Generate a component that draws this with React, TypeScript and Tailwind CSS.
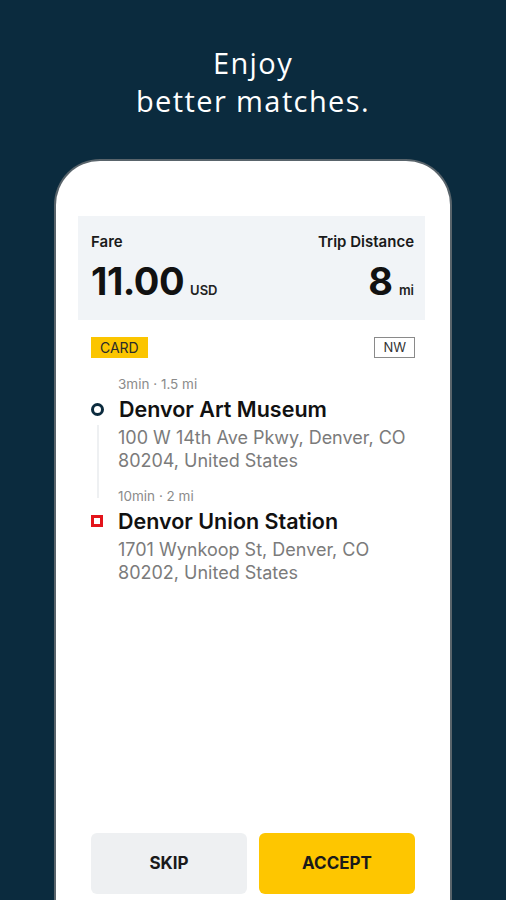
import { } from "react";

const sans = "font-['Inter','Noto_Sans',sans-serif]";

function Stop({ meta, title, address, kind, line }: { meta: string; title: string; address: string[]; kind: "start" | "end"; line?: boolean }) {
  return (
    <div className="relative flex flex-col">
      {line && <div className="absolute left-[6px] top-[50px] bottom-[-26px] w-[2px] bg-[#eef0f2]" />}
      <p className="pl-[27px] text-[13.5px] leading-[18px] text-[#8b8b8b]">{meta}</p>
      <div className="mt-[3px] flex items-center gap-[15px]">
        {kind === "start" ? (
          <span className="relative z-10 h-[13px] w-[13px] shrink-0 rounded-full border-[3.5px] border-[#0b2b3e] bg-white" />
        ) : (
          <span className="relative z-10 h-[12px] w-[12px] shrink-0 border-[3px] border-[#e3141b] bg-white" />
        )}
        <p className="text-[21.5px] font-semibold leading-[26px] text-[#111]">{title}</p>
      </div>
      <div className="mt-[4px] pl-[27px] text-[18px] leading-[23px] text-[#7b7b7b]">
        {address.map((a) => (
          <p key={a}>{a}</p>
        ))}
      </div>
    </div>
  );
}

export default function App() {
  return (
    <div className={`flex h-[900px] flex-col items-center overflow-hidden bg-[#0b2b3e] ${sans}`}>
      <h1 className="mt-[44px] text-center font-['Open_Sans','Noto_Sans',sans-serif] text-[29px] font-normal leading-[38px] tracking-[1.4px] text-white">
        Enjoy
        <br />
        better matches.
      </h1>

      <div className="mt-[39px] flex w-[398px] flex-1 flex-col rounded-t-[46px] border-x-2 border-t-2 border-[#59646b] bg-white pl-[22px] pr-[25px] pt-[55px] pb-[6px]">
        {/* fare box */}
        <div className="flex h-[104px] items-start justify-between bg-[#f1f4f7] pl-[13px] pr-[11px] pt-[16px]">
          <div className="flex flex-col">
            <p className="text-[15px] font-semibold leading-[20px] text-[#1a1a1a]">Fare</p>
            <p className="mt-[7px] flex items-baseline gap-[6px]">
              <span className="text-[38px] font-bold leading-[44px] tracking-[-0.5px] text-[#111]">11.00</span>
              <span className="text-[13px] font-semibold text-[#222]">USD</span>
            </p>
          </div>
          <div className="flex flex-col items-end">
            <p className="text-[15px] font-semibold leading-[20px] text-[#1a1a1a]">Trip Distance</p>
            <p className="mt-[7px] flex items-baseline gap-[6px]">
              <span className="text-[38px] font-bold leading-[44px] text-[#111]">8</span>
              <span className="text-[13px] font-semibold text-[#222]">mi</span>
            </p>
          </div>
        </div>

        {/* trip details */}
        <div className="flex flex-col pl-[13px] pr-[10px]">
          <div className="mt-[17px] flex items-center justify-between">
            <span className="flex h-[21px] items-center bg-[#fbc500] px-[9px] text-[14px] leading-none text-[#2a2a2a]">CARD</span>
            <span className="flex h-[21px] items-center border border-[#8a8a8a] px-[8px] text-[13px] leading-none text-[#333]">NW</span>
          </div>

          <div className="mt-[17px] flex flex-col gap-[15px]">
            <Stop
              meta="3min · 1.5 mi"
              title="Denvor Art Museum"
              address={["100 W 14th Ave Pkwy, Denver, CO", "80204, United States"]}
              kind="start"
              line
            />
            <Stop
              meta="10min · 2 mi"
              title="Denvor Union Station"
              address={["1701 Wynkoop St, Denver, CO", "80202, United States"]}
              kind="end"
            />
          </div>
        </div>

        {/* actions */}
        <div className="mt-auto flex gap-[12px] pl-[13px] pr-[10px]">
          <button className="flex h-[61px] flex-1 items-center justify-center rounded-[6px] bg-[#eef0f2] text-[17px] font-bold text-[#1a1a1a]">
            SKIP
          </button>
          <button className="flex h-[61px] flex-1 items-center justify-center rounded-[6px] bg-[#fec600] text-[17px] font-bold text-[#1a1a1a]">
            ACCEPT
          </button>
        </div>
      </div>
    </div>
  );
}
